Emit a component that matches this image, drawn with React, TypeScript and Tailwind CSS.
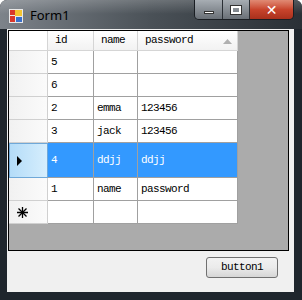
import React from 'react';

const rows = [
  { id: '5', name: '', password: '' },
  { id: '6', name: '', password: '' },
  { id: '2', name: 'emma', password: '123456' },
  { id: '3', name: 'jack', password: '123456' },
  { id: '4', name: 'ddjj', password: 'ddjj', selected: true },
  { id: '1', name: 'name', password: 'password' },
];

const mono = { fontFamily: '"Liberation Mono", "DejaVu Sans Mono", monospace' };

const Cell = ({ w, children, sel }: { w: string; children?: React.ReactNode; sel?: boolean }) => (
  <div
    className={`${w} shrink-0 h-full flex items-center pl-[3px] text-[11px] tracking-[-0.6px] border-r border-b ${
      sel ? 'bg-[#3399ff] text-white border-[#a0a0a0]' : 'bg-white text-black border-[#a0a0a0]'
    }`}
  >
    {children}
  </div>
);

const RowHeader = ({ sel, star }: { sel?: boolean; star?: boolean }) => (
  <div
    className={`w-[39px] shrink-0 h-full flex items-center pl-[7px] border-r border-b ${
      sel
        ? 'bg-gradient-to-r from-[#b4dcf8] to-[#d6eefd] border-[#6fa8d8] border-l border-t'
        : 'bg-gradient-to-r from-[#f1f1f1] to-[#fbfbfb] border-[#d0d0d0]'
    }`}
  >
    {sel && (
      <svg width="6" height="10" viewBox="0 0 6 10">
        <path d="M0 0 L5 5 L0 10 Z" fill="#000" />
      </svg>
    )}
    {star && (
      <svg width="11" height="11" viewBox="0 0 11 11" className="ml-[1px]">
        <g stroke="#000" strokeWidth="1.3">
          <line x1="5.5" y1="0" x2="5.5" y2="11" />
          <line x1="0" y1="5.5" x2="11" y2="5.5" />
          <line x1="1.5" y1="1.5" x2="9.5" y2="9.5" />
          <line x1="9.5" y1="1.5" x2="1.5" y2="9.5" />
        </g>
      </svg>
    )}
  </div>
);

export default function App() {
  return (
    <div className="w-[302px] h-[300px] bg-[#1f262d] rounded-t-[7px] flex flex-col overflow-hidden relative">
      {/* title bar */}
      <div className="h-[29px] shrink-0 flex items-start bg-gradient-to-r from-[#7d838a] via-[#4a5157] to-[#2a3036] relative">
        <div className="absolute inset-x-0 top-0 h-[14px] bg-gradient-to-b from-white/20 to-transparent" />
        <div className="flex items-center pl-[9px] pt-[6px] gap-[7px] relative">
          <svg width="14" height="14" viewBox="0 0 14 14">
            <rect x="0" y="0" width="14" height="14" fill="#e8e8e8" />
            <rect x="1" y="1" width="5" height="5" fill="#d9382c" />
            <rect x="6" y="1" width="7" height="6" fill="#f4c430" />
            <rect x="1" y="7" width="5" height="6" fill="#d9382c" />
            <rect x="7" y="8" width="6" height="5" fill="#3a6fc9" />
          </svg>
          <span className="text-[13px] text-black" style={{ fontFamily: '"Noto Sans", "Open Sans", sans-serif' }}>
            Form1
          </span>
        </div>
        <div className="ml-auto mr-[8px] flex h-[20px] rounded-b-[5px] overflow-hidden border border-t-0 border-[#1a1e23] relative">
          <div className="w-[28px] h-full flex items-center justify-center bg-gradient-to-b from-[#a7adb3] to-[#6a7077] border-r border-[#2a2f35]">
            <div className="w-[10px] h-[3px] bg-white mt-[5px] border border-[#333]" />
          </div>
          <div className="w-[27px] h-full flex items-center justify-center bg-gradient-to-b from-[#a7adb3] to-[#6a7077] border-r border-[#2a2f35]">
            <div className="w-[10px] h-[8px] border-2 border-white outline outline-1 outline-[#333]" />
          </div>
          <div className="w-[43px] h-full flex items-center justify-center bg-gradient-to-b from-[#e08a74] via-[#c8442c] to-[#a9301c]">
            <span className="text-white font-bold text-[14px] leading-none" style={{ fontFamily: '"DejaVu Sans", sans-serif' }}>
              ✕
            </span>
          </div>
        </div>
      </div>

      {/* client area */}
      <div className="flex-1 mb-[8px] ml-[7px] mr-[8px] bg-[#f0f0f0] flex flex-col pt-[1px] px-[1px]">
        <div className="w-[281px] h-[221px] border border-black bg-[#ababab] flex flex-col" style={mono}>
          {/* header row */}
          <div className="h-[20px] flex shrink-0">
            <div className="w-[39px] h-full bg-white border-r border-b border-[#d5d5d5]" />
            {['id', 'name', 'password'].map((h, i) => (
              <div
                key={h}
                className={`${['w-[46px]', 'w-[44px]', 'w-[100px]'][i]} h-full flex items-center pl-[7px] text-[11px] tracking-[-0.6px] text-black bg-gradient-to-b from-white to-[#f2f2f2] border-r border-b border-[#d5d5d5] relative`}
              >
                {h}
                {i === 2 && (
                  <svg width="9" height="5" viewBox="0 0 9 5" className="absolute right-[5px] top-[8px]">
                    <path d="M0 5 L4.5 0 L9 5 Z" fill="#b0b0b0" />
                  </svg>
                )}
              </div>
            ))}
          </div>
          {rows.map((r) => (
            <div key={r.id} className={`${r.selected ? 'h-[35px]' : 'h-[23px]'} flex shrink-0`}>
              <RowHeader sel={r.selected} />
              <Cell w="w-[46px]" sel={r.selected}>{r.id}</Cell>
              <Cell w="w-[44px]" sel={r.selected}>{r.name}</Cell>
              <Cell w="w-[100px]" sel={r.selected}>{r.password}</Cell>
            </div>
          ))}
          <div className="h-[23px] flex shrink-0">
            <RowHeader star />
            <Cell w="w-[46px]" />
            <Cell w="w-[44px]" />
            <Cell w="w-[100px]" />
          </div>
        </div>
        <div className="flex justify-end pr-[15px] pt-[6px]">
          <button
            className="w-[72px] h-[21px] rounded-[3px] border border-[#707070] bg-gradient-to-b from-[#f2f2f2] via-[#ebebeb] to-[#d6d6d6] text-[11px] tracking-[-0.6px] text-black flex items-center justify-center"
            style={mono}
          >
            button1
          </button>
        </div>
      </div>
    </div>
  );
}
